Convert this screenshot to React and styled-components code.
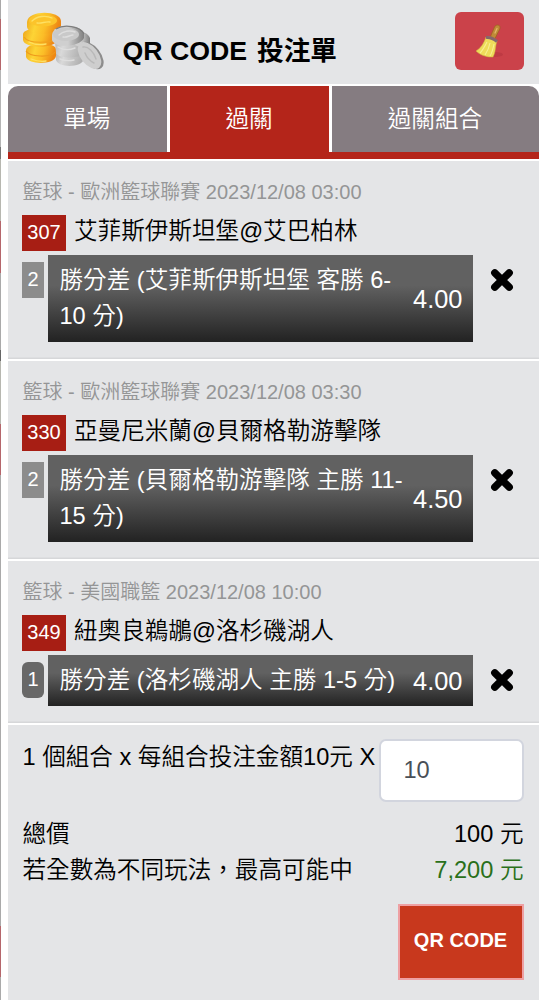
import React, { useState } from "react";
import styled, { createGlobalStyle, css } from "styled-components";

const color = {
  panel: "#e4e5e7",
  red: "#b4251a",
  tab: "#857c81",
  code: "#a71e14",
  muted: "#949596",
  win: "#2a701a",
};

const initialBets = [
  {
    code: "307",
    league: "籃球 - 歐洲籃球聯賽 2023/12/08 03:00",
    match: "艾菲斯伊斯坦堡@艾巴柏林",
    min: 2,
    pick: "勝分差 (艾菲斯伊斯坦堡 客勝 6-10 分)",
    odds: "4.00",
  },
  {
    code: "330",
    league: "籃球 - 歐洲籃球聯賽 2023/12/08 03:30",
    match: "亞曼尼米蘭@貝爾格勒游擊隊",
    min: 2,
    pick: "勝分差 (貝爾格勒游擊隊 主勝 11-15 分)",
    odds: "4.50",
  },
  {
    code: "349",
    league: "籃球 - 美國職籃 2023/12/08 10:00",
    match: "紐奧良鵜鶘@洛杉磯湖人",
    min: 1,
    pick: "勝分差 (洛杉磯湖人 主勝 1-5 分)",
    odds: "4.00",
  },
];

const tabs = ["單場", "過關", "過關組合"];

const Coins = () => (
  <CoinsSvg viewBox="0 0 84 60" aria-hidden="true">
    <defs>
      <linearGradient id="gold" x1="0" x2="1" y1="0" y2="0.2">
        <stop offset="0" stopColor="#eda51c" />
        <stop offset="0.35" stopColor="#fdd435" />
        <stop offset="0.65" stopColor="#fbbd27" />
        <stop offset="1" stopColor="#ee8714" />
      </linearGradient>
      <linearGradient id="silver" x1="0" x2="1" y1="0" y2="0.2">
        <stop offset="0" stopColor="#b4b4b4" />
        <stop offset="0.35" stopColor="#d9d9d9" />
        <stop offset="1" stopColor="#b0b0b0" />
      </linearGradient>
      <linearGradient id="edge" x1="0" x2="1">
        <stop offset="0.5" stopColor="#cfcfcf" />
        <stop offset="1" stopColor="#808080" />
      </linearGradient>
    </defs>
    <g fill="url(#gold)">
      <path d="M4 38c1-8 29-8 30-1v7c-1 9-28 9-30 1z" />
      <path d="M4 39c3 6 25 7 29 1" fill="none" stroke="#ee9a1c" strokeWidth="1.2" />
      <path d="M1 22c1-8 34-7 34 1v5c-1 9-33 9-34 0z" />
      <path d="M2 25c4 7 29 7 33 0" fill="none" stroke="#f0a01e" strokeWidth="1.2" />
      <path d="M5 10C6-2 38-2 39 9v5c-2 10-32 11-34 1z" />
    </g>
    <ellipse cx="21" cy="8.5" rx="14" ry="6" fill="#fcc42b" />
    <g fill="none" stroke="#fee063" strokeWidth="1.3" strokeLinecap="round">
      <path d="M10 9c5-5 14-6 20-3M15 11c5 1 8-2 13-1M7 30c6 3 12 3 17 2M9 47c5 2 10 3 15 2" />
    </g>
    <g fill="url(#silver)">
      <path d="M34 42c2-5 26-5 28 0v5c-2 9-26 9-28 1z" />
      <path d="M33 30c2-6 28-5 29 2v9c-3 6-26 6-28 0z" />
      <path d="M50 19c9-1 16 2 18 7v5c-4 4-12 5-16 1z" fill="url(#edge)" />
      <path d="M30 23c1-12 28-11 32-2v5c-4 9-29 11-32 2z" fill="url(#edge)" />
    </g>
    <path d="M34 17c8-5 24-3 28 5" fill="none" stroke="#7d7d7d" strokeWidth="1.2" />
    <ellipse cx="44" cy="22.5" rx="13" ry="6.5" fill="#c9c9c9" />
    <path
      d="M37 23c4-4 11-5 16-3M41 25c4 1 7-2 10-2M36 35c5 3 12 3 17 1M38 47c5 2 9 2 14 1"
      fill="none"
      stroke="#dedede"
      strokeWidth="1.4"
      strokeLinecap="round"
    />
    <ellipse cx="69.5" cy="43.5" rx="16" ry="9" transform="rotate(52 69.5 43.5)" fill="#8d8d8d" />
    <ellipse cx="67.5" cy="43.5" rx="15.5" ry="8.8" transform="rotate(52 67.5 43.5)" fill="#cecece" />
    <path
      d="M61 35c5-1 11 5 13 12M63 41c2 5 5 8 9 10"
      fill="none"
      stroke="#b9b9b9"
      strokeWidth="1.4"
      strokeLinecap="round"
    />
  </CoinsSvg>
);

const Broom = () => (
  <svg width="30" height="34" viewBox="0 0 30 34" aria-hidden="true">
    <ellipse cx="20" cy="30.5" rx="8" ry="2.5" fill="#a9303a" opacity="0.4" />
    <path
      d="M15.500 12.500L19.500 3C20.500 0.500 25 0 25 3.500c0 2-1 3-1.500 4L20 14.500z"
      fill="#c08a38"
      stroke="#99611c"
      strokeWidth="0.7"
    />
    <path d="M20 9l2-4.500" stroke="#e2b767" strokeWidth="1.3" strokeLinecap="round" />
    <path
      d="M11 13c4-1 9 1 11 4-2 5-1 11-4 16-6 .5-13-2-17-6 5-3 8-8 10-14z"
      fill="#eedb5a"
      stroke="#cdb540"
      strokeWidth="0.5"
    />
    <path
      d="M12 18c-2 4-4 8-7 11M15 19c-1 5-3 9-5 12M19 20c-1 5-2 9-4 12"
      fill="none"
      stroke="#f8ef91"
      strokeWidth="1.1"
    />
    <path d="M11 13.500c4-.5 8 1.500 11 4" fill="none" stroke="#85666c" strokeWidth="3" />
  </svg>
);

const Cross = () => (
  <svg width="24" height="24" viewBox="0 0 24 24" aria-hidden="true">
    <path d="M4.800 4.800l14.400 14.400M19.200 4.800L4.800 19.200" stroke="#000" strokeWidth="7.400" strokeLinecap="round" />
  </svg>
);

const Bet = ({ bet, onRemove }) => (
  <BetItem>
    <League>{bet.league}</League>
    <Match>
      <Code>{bet.code}</Code>
      <span>{bet.match}</span>
    </Match>
    <PickRow>
      <MinBadge $single={bet.min === 1}>{bet.min}</MinBadge>
      <Pick>
        <PickText>{bet.pick}</PickText>
        <Odds>{bet.odds}</Odds>
      </Pick>
      <RemoveButton type="button" aria-label="刪除" onClick={onRemove}>
        <Cross />
      </RemoveButton>
    </PickRow>
  </BetItem>
);

const App = () => {
  const [bets, setBets] = useState(initialBets);
  const [active, setActive] = useState("過關");
  const [amount, setAmount] = useState("10");

  return (
    <>
      <GlobalStyle />
      <Page lang="zh-Hant">
        <Panel>
          <Header>
            <Coins />
            <Title>
              QR CODE <span>投注單</span>
            </Title>
            <ClearButton type="button" aria-label="清除" onClick={() => setBets([])}>
              <Broom />
            </ClearButton>
          </Header>
          <Tabs>
            {tabs.map(tab => (
              <Tab key={tab} type="button" $active={tab === active} onClick={() => setActive(tab)}>
                {tab}
              </Tab>
            ))}
          </Tabs>
          {bets.map(bet => (
            <Bet
              key={bet.code}
              bet={bet}
              onRemove={() => setBets(bets.filter(({ code }) => code !== bet.code))}
            />
          ))}
          <Summary>
            <StakeRow>
              <span>1 個組合 x 每組合投注金額10元 X</span>
              <StakeInput value={amount} onChange={e => setAmount(e.target.value)} />
            </StakeRow>
            <TotalRow>
              <span>總價</span>
              <span>{Number(amount) * 10} 元</span>
            </TotalRow>
            <TotalRow>
              <span>若全數為不同玩法，最高可能中</span>
              <Win>{(Number(amount) * 720).toLocaleString("en-US")} 元</Win>
            </TotalRow>
            <QrButton type="button">QR CODE</QrButton>
          </Summary>
        </Panel>
      </Page>
    </>
  );
};

export default App;

const GlobalStyle = createGlobalStyle`
  * {
    box-sizing: border-box;
  }

  body {
    margin: 0;
    background: #fff;
    color: #000;
    font-family: "Liberation Sans", "Noto Sans CJK TC", sans-serif;
    font-size: 23.6px;
    font-weight: 350;
    line-height: 36px;
  }

  button,
  input {
    font-family: inherit;
    font-weight: inherit;
    margin: 0;
  }
`;

/* the dimmed site behind the slip shows as a thin strip on the left */
const Page = styled.div`
  height: 1000px;
  overflow: hidden;
  padding: 0 7.5px 0 7px;
  border-left: 1px solid #aaa;
  border-image: linear-gradient(
      #aaa9a9 20px,
      #b5666b 20px 71px,
      #b5b5b5 71px 148px,
      #777 148px 160px,
      #b7b7b0 160px 222px,
      #b5666b 222px 273px,
      #aaa 273px 350px,
      #666 350px 361px,
      #b7b7b0 361px 424px,
      #b5666b 424px 475px,
      #aaa 475px 925px,
      #b5666b 925px 976px,
      #aaa 976px
    )
    1;
`;

const Panel = styled.div`
  height: 1000px;
  display: flex;
  flex-direction: column;
`;

const Header = styled.header`
  flex: none;
  height: 84px;
  display: flex;
  align-items: flex-start;
  padding: 12px 14.5px 0 14px;
  background: ${color.panel};
`;

const CoinsSvg = styled.svg`
  width: 84px;
  height: 60px;
  flex: none;
`;

const Title = styled.h1`
  flex: 1;
  margin: 21px 0 0 16.5px;
  font-size: 26.7px;
  line-height: 36px;
  font-weight: 700;
  white-space: nowrap;

  span {
    margin-left: 2.5px;
  }
`;

const ClearButton = styled.button`
  width: 69px;
  height: 58px;
  display: flex;
  align-items: center;
  justify-content: center;
  padding: 0;
  border: 0;
  border-radius: 6px;
  background: #cb424a;
`;

const Tabs = styled.nav`
  flex: none;
  display: grid;
  grid-template-columns: 158.7px 158.7px 1fr;
  gap: 3.5px;
  height: 73px;
  margin: 2px 0;
  border-bottom: 7px solid ${color.red};
`;

const Tab = styled.button`
  border: 0;
  padding: 0 1px 4px 0;
  color: #fff;
  font-size: 23.6px;
  background: ${({ $active }) => ($active ? color.red : color.tab)};

  &:first-child {
    border-top-left-radius: 10px;
  }

  &:last-child {
    border-top-right-radius: 10px;
  }
`;

const BetItem = styled.section`
  flex: none;
  padding: 14px 14.5px 17px 14px;
  background: ${color.panel};
  border-bottom: 2px solid #fff;
  box-shadow: inset 0 -1.5px #d6d7d9;
`;

const League = styled.div`
  padding-left: 0.5px;
  color: ${color.muted};
  font-size: 20px;
  line-height: 34px;
`;

const Match = styled.div`
  display: flex;
  gap: 8px;
  margin-top: 5px;
  line-height: 34px;
  white-space: nowrap;
`;

const Code = styled.span`
  width: 44px;
  height: 36px;
  margin-top: 1px;
  background: ${color.code};
  color: #fff;
  font-size: 20px;
  line-height: 34px;
  text-align: center;
`;

const PickRow = styled.div`
  display: flex;
  align-items: flex-start;
  margin-top: 4px;
`;

const MinBadge = styled.span`
  width: 22px;
  height: 36px;
  margin: 7px 4px 0 0;
  background: #8c8c8c;
  color: #fff;
  font-size: 20px;
  line-height: 34px;
  text-align: center;

  ${({ $single }) =>
    $single &&
    css`
      background: #686868;
      border-radius: 6px;
    `};
`;

const Pick = styled.div`
  width: 425px;
  display: flex;
  align-items: center;
  justify-content: space-between;
  padding: 7px 10.5px 8px 11.5px;
  background: linear-gradient(#616161 35%, #222);
  color: #fff;
`;

const PickText = styled.span`
  width: 346px;
`;

const Odds = styled.span`
  font-size: 25.4px;
  padding-top: 2px;
  line-height: 32px;
`;

const RemoveButton = styled.button`
  display: flex;
  margin: 13px 0 0 17px;
  padding: 0;
  border: 0;
  background: none;
`;

const Summary = styled.section`
  flex: 1;
  display: flex;
  flex-direction: column;
  padding: 14px 15px 0 14.5px;
  background: ${color.panel};
`;

const StakeRow = styled.label`
  display: flex;
  align-items: flex-start;
  justify-content: space-between;
  margin-bottom: 14px;
  white-space: nowrap;
`;

const StakeInput = styled.input`
  width: 145px;
  height: 63px;
  padding: 0 23px;
  border: 2px solid #d2d5de;
  border-radius: 7px;
  background: #fff;
  color: #495057;
  font-size: 23.6px;
`;

const TotalRow = styled.div`
  display: flex;
  justify-content: space-between;
`;

const Win = styled.span`
  color: ${color.win};
`;

const QrButton = styled.button`
  align-self: flex-end;
  width: 126px;
  height: 76px;
  margin-top: 16px;
  padding: 0 0 3px;
  border: 2px solid #eea0a3;
  background: #c8381d;
  color: #fff;
  font-size: 20px;
  font-weight: 700;
`;
